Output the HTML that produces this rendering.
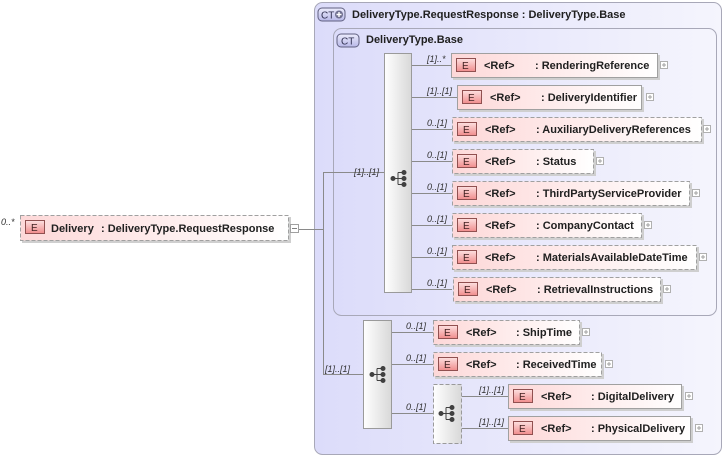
<!DOCTYPE html>
<html><head><meta charset="utf-8"><style>
html,body{margin:0;padding:0;background:#fff;width:728px;height:458px;overflow:hidden}
svg{display:block}
text{font-family:"Liberation Sans",Arial,sans-serif}
.t{font-size:11px;font-weight:bold;fill:#202020}
.c{font-size:9px;font-style:italic;fill:#303030}
.ln{stroke:#8a8a8a;stroke-width:1;fill:none}
</style></head><body>
<svg width="728" height="458" xmlns="http://www.w3.org/2000/svg">
<defs>
<linearGradient id="ct" x1="0" y1="0" x2="1" y2="0"><stop offset="0" stop-color="#dcdcfa"/><stop offset="1" stop-color="#f5f5fd"/></linearGradient>
<linearGradient id="el" x1="0" y1="0" x2="1" y2="0"><stop offset="0" stop-color="#fdd8d8"/><stop offset="1" stop-color="#ffffff"/></linearGradient>
<linearGradient id="eb" x1="0" y1="0" x2="0" y2="1"><stop offset="0" stop-color="#fde0e0"/><stop offset="1" stop-color="#f08c8c"/></linearGradient>
<linearGradient id="sq" x1="0" y1="0" x2="1" y2="0"><stop offset="0" stop-color="#ffffff"/><stop offset="1" stop-color="#d8d8d8"/></linearGradient>
<linearGradient id="ctb" x1="0" y1="0" x2="0" y2="1"><stop offset="0" stop-color="#ececfc"/><stop offset="1" stop-color="#b8b8e8"/></linearGradient>
</defs>

<rect x="314.5" y="2.5" width="407" height="452" rx="8" fill="url(#ct)" stroke="#a8a8b8"/>
<rect x="318" y="8" width="27" height="13" rx="4" fill="url(#ctb)" stroke="#606080"/>
<text x="321" y="18.5" style="font-size:10px;fill:#303050">CT</text>
<circle cx="339" cy="14.5" r="4" fill="#707090"/><path d="M336.5 14.5h5M339 12v5" stroke="#fff" stroke-width="1.4"/>
<text x="352" y="18" class="t">DeliveryType.RequestResponse : DeliveryType.Base</text>

<rect x="333.5" y="28.5" width="383" height="287" rx="8" fill="url(#ct)" stroke="#a8a8b8"/>
<rect x="337" y="34" width="22" height="13" rx="4" fill="url(#ctb)" stroke="#606080"/>
<text x="341" y="44.5" style="font-size:10px;fill:#303050">CT</text>
<text x="366" y="43" class="t">DeliveryType.Base</text>

<path class="ln" d="M296 229.5H323.5V172.5H384M323.5 229.5V374.5H363"/>
<text x="354" y="175" class="c">[1]..[1]</text>
<text x="325" y="372" class="c">[1]..[1]</text>

<path class="ln" d="M412 65.5H451M412 97.5H457M412 129.5H452M412 161.5H452M412 193.5H452M412 225.5H452M412 257.5H452M412 289.5H452"/>
<rect x="384.5" y="53.5" width="27" height="239" fill="url(#sq)" stroke="#9a9a9a"/>
<g fill="#404040" stroke="#404040">
<circle cx="393" cy="178.5" r="2"/><path d="M393 178.5h5M398 172.5v12M398 172.5h6M398 178.5h6M398 184.5h6" fill="none"/>
<circle cx="404" cy="172.5" r="2"/><circle cx="404" cy="178.5" r="2"/><circle cx="404" cy="184.5" r="2"/>
</g>
<text x="427" y="62" class="c">[1]..*</text>
<text x="427" y="94" class="c">[1]..[1]</text>
<text x="427" y="126" class="c">0..[1]</text>
<text x="427" y="158" class="c">0..[1]</text>
<text x="427" y="190" class="c">0..[1]</text>
<text x="427" y="222" class="c">0..[1]</text>
<text x="427" y="254" class="c">0..[1]</text>
<text x="427" y="286" class="c">0..[1]</text>

<path class="ln" d="M392 332.5H433M392 364.5H433M392 413.5H433M462 396.5H508M462 428.5H508"/>
<rect x="363.5" y="320.5" width="28" height="108" fill="url(#sq)" stroke="#9a9a9a"/>
<g fill="#404040" stroke="#404040">
<circle cx="372" cy="374.5" r="2"/><path d="M372 374.5h5M377 368.5v12M377 368.5h6M377 374.5h6M377 380.5h6" fill="none"/>
<circle cx="383" cy="368.5" r="2"/><circle cx="383" cy="374.5" r="2"/><circle cx="383" cy="380.5" r="2"/>
</g>
<text x="406" y="329" class="c">0..[1]</text>
<text x="406" y="361" class="c">0..[1]</text>
<text x="406" y="410" class="c">0..[1]</text>
<rect x="433.5" y="384.5" width="28" height="59" fill="url(#sq)" stroke="#9a9a9a" stroke-dasharray="4,2"/>
<g fill="#404040" stroke="#404040">
<circle cx="441" cy="413.5" r="2"/><path d="M441 413.5h5M446 407.5v12M446 407.5h6M446 413.5h6M446 419.5h6" fill="none"/>
<circle cx="452" cy="407.5" r="2"/><circle cx="452" cy="413.5" r="2"/><circle cx="452" cy="419.5" r="2"/>
</g>
<text x="479" y="393" class="c">[1]..[1]</text>
<text x="479" y="425" class="c">[1]..[1]</text>

<text x="1" y="225" class="c">0..*</text>
<rect x="22" y="217" width="269" height="26" fill="#cfcfcf"/>
<rect x="20.5" y="215.5" width="268" height="25" fill="url(#el)" stroke="#a0a0a0" stroke-dasharray="4,2"/>
<rect x="25.5" y="220.5" width="19" height="13" fill="url(#eb)" stroke="#905050"/>
<text x="31" y="231" style="font-size:10px;fill:#402020">E</text>
<text x="51" y="232" class="t">Delivery</text>
<text x="101" y="232" class="t">: DeliveryType.RequestResponse</text>
<rect x="290.5" y="224.5" width="8" height="8" fill="#fff" stroke="#a0a0a0"/><path d="M292 228.5h5" stroke="#808080"/>

<g>
<rect x="453" y="55" width="207" height="25" fill="#cfcfcf"/><rect x="451.5" y="53.5" width="206" height="24" fill="url(#el)" stroke="#a0a0a0"/>
<rect x="456.5" y="58.5" width="19" height="13" fill="url(#eb)" stroke="#905050"/><text x="462" y="69" style="font-size:10px;fill:#402020">E</text>
<text x="484" y="69" class="t">&lt;Ref&gt;</text><text x="535" y="69" class="t">: RenderingReference</text>
<rect x="660.5" y="61.5" width="7" height="7" fill="#fff" stroke="#b0b0b0"/><path d="M662 65h4M664 63v4" stroke="#a0a0a0"/>

<rect x="459" y="87" width="185" height="25" fill="#cfcfcf"/><rect x="457.5" y="85.5" width="184" height="24" fill="url(#el)" stroke="#a0a0a0"/>
<rect x="462.5" y="90.5" width="19" height="13" fill="url(#eb)" stroke="#905050"/><text x="468" y="101" style="font-size:10px;fill:#402020">E</text>
<text x="490" y="101" class="t">&lt;Ref&gt;</text><text x="541" y="101" class="t">: DeliveryIdentifier</text>
<rect x="646.5" y="93.5" width="7" height="7" fill="#fff" stroke="#b0b0b0"/><path d="M648 97h4M650 95v4" stroke="#a0a0a0"/>

<rect x="454" y="119" width="250" height="25" fill="#cfcfcf"/><rect x="452.5" y="117.5" width="249" height="24" fill="url(#el)" stroke="#a0a0a0" stroke-dasharray="4,2"/>
<rect x="457.5" y="122.5" width="19" height="13" fill="url(#eb)" stroke="#905050"/><text x="463" y="133" style="font-size:10px;fill:#402020">E</text>
<text x="485" y="133" class="t">&lt;Ref&gt;</text><text x="536" y="133" class="t">: AuxiliaryDeliveryReferences</text>
<rect x="703.5" y="125.5" width="7" height="7" fill="#fff" stroke="#b0b0b0"/><path d="M705 129h4M707 127v4" stroke="#a0a0a0"/>

<rect x="454" y="151" width="142" height="25" fill="#cfcfcf"/><rect x="452.5" y="149.5" width="141" height="24" fill="url(#el)" stroke="#a0a0a0" stroke-dasharray="4,2"/>
<rect x="457.5" y="154.5" width="19" height="13" fill="url(#eb)" stroke="#905050"/><text x="463" y="165" style="font-size:10px;fill:#402020">E</text>
<text x="485" y="165" class="t">&lt;Ref&gt;</text><text x="536" y="165" class="t">: Status</text>
<rect x="596.5" y="157.5" width="7" height="7" fill="#fff" stroke="#b0b0b0"/><path d="M598 161h4M600 159v4" stroke="#a0a0a0"/>

<rect x="454" y="183" width="238" height="25" fill="#cfcfcf"/><rect x="452.5" y="181.5" width="237" height="24" fill="url(#el)" stroke="#a0a0a0" stroke-dasharray="4,2"/>
<rect x="457.5" y="186.5" width="19" height="13" fill="url(#eb)" stroke="#905050"/><text x="463" y="197" style="font-size:10px;fill:#402020">E</text>
<text x="485" y="197" class="t">&lt;Ref&gt;</text><text x="536" y="197" class="t">: ThirdPartyServiceProvider</text>
<rect x="692.5" y="189.5" width="7" height="7" fill="#fff" stroke="#b0b0b0"/><path d="M694 193h4M696 191v4" stroke="#a0a0a0"/>

<rect x="454" y="215" width="190" height="25" fill="#cfcfcf"/><rect x="452.5" y="213.5" width="189" height="24" fill="url(#el)" stroke="#a0a0a0" stroke-dasharray="4,2"/>
<rect x="457.5" y="218.5" width="19" height="13" fill="url(#eb)" stroke="#905050"/><text x="463" y="229" style="font-size:10px;fill:#402020">E</text>
<text x="485" y="229" class="t">&lt;Ref&gt;</text><text x="536" y="229" class="t">: CompanyContact</text>
<rect x="644.5" y="221.5" width="7" height="7" fill="#fff" stroke="#b0b0b0"/><path d="M646 225h4M648 223v4" stroke="#a0a0a0"/>

<rect x="454" y="247" width="245" height="25" fill="#cfcfcf"/><rect x="452.5" y="245.5" width="244" height="24" fill="url(#el)" stroke="#a0a0a0" stroke-dasharray="4,2"/>
<rect x="457.5" y="250.5" width="19" height="13" fill="url(#eb)" stroke="#905050"/><text x="463" y="261" style="font-size:10px;fill:#402020">E</text>
<text x="485" y="261" class="t">&lt;Ref&gt;</text><text x="536" y="261" class="t">: MaterialsAvailableDateTime</text>
<rect x="699.5" y="253.5" width="7" height="7" fill="#fff" stroke="#b0b0b0"/><path d="M701 257h4M703 255v4" stroke="#a0a0a0"/>

<rect x="455" y="279" width="208" height="25" fill="#cfcfcf"/><rect x="453.5" y="277.5" width="207" height="24" fill="url(#el)" stroke="#a0a0a0" stroke-dasharray="4,2"/>
<rect x="458.5" y="282.5" width="19" height="13" fill="url(#eb)" stroke="#905050"/><text x="464" y="293" style="font-size:10px;fill:#402020">E</text>
<text x="486" y="293" class="t">&lt;Ref&gt;</text><text x="537" y="293" class="t">: RetrievalInstructions</text>
<rect x="663.5" y="285.5" width="7" height="7" fill="#fff" stroke="#b0b0b0"/><path d="M665 289h4M667 287v4" stroke="#a0a0a0"/>

<rect x="435" y="322" width="147" height="25" fill="#cfcfcf"/><rect x="433.5" y="320.5" width="146" height="24" fill="url(#el)" stroke="#a0a0a0" stroke-dasharray="4,2"/>
<rect x="438.5" y="325.5" width="19" height="13" fill="url(#eb)" stroke="#905050"/><text x="444" y="336" style="font-size:10px;fill:#402020">E</text>
<text x="466" y="336" class="t">&lt;Ref&gt;</text><text x="516" y="336" class="t">: ShipTime</text>
<rect x="582.5" y="328.5" width="7" height="7" fill="#fff" stroke="#b0b0b0"/><path d="M584 332h4M586 330v4" stroke="#a0a0a0"/>

<rect x="435" y="354" width="169" height="25" fill="#cfcfcf"/><rect x="433.5" y="352.5" width="168" height="24" fill="url(#el)" stroke="#a0a0a0" stroke-dasharray="4,2"/>
<rect x="438.5" y="357.5" width="19" height="13" fill="url(#eb)" stroke="#905050"/><text x="444" y="368" style="font-size:10px;fill:#402020">E</text>
<text x="466" y="368" class="t">&lt;Ref&gt;</text><text x="516" y="368" class="t">: ReceivedTime</text>
<rect x="605.5" y="360.5" width="7" height="7" fill="#fff" stroke="#b0b0b0"/><path d="M607 364h4M609 362v4" stroke="#a0a0a0"/>

<rect x="510" y="386" width="174" height="25" fill="#cfcfcf"/><rect x="508.5" y="384.5" width="173" height="24" fill="url(#el)" stroke="#a0a0a0"/>
<rect x="513.5" y="389.5" width="19" height="13" fill="url(#eb)" stroke="#905050"/><text x="519" y="400" style="font-size:10px;fill:#402020">E</text>
<text x="541" y="400" class="t">&lt;Ref&gt;</text><text x="591" y="400" class="t">: DigitalDelivery</text>
<rect x="685.5" y="392.5" width="7" height="7" fill="#fff" stroke="#b0b0b0"/><path d="M687 396h4M689 394v4" stroke="#a0a0a0"/>

<rect x="510" y="418" width="183" height="25" fill="#cfcfcf"/><rect x="508.5" y="416.5" width="182" height="24" fill="url(#el)" stroke="#a0a0a0"/>
<rect x="513.5" y="421.5" width="19" height="13" fill="url(#eb)" stroke="#905050"/><text x="519" y="432" style="font-size:10px;fill:#402020">E</text>
<text x="541" y="432" class="t">&lt;Ref&gt;</text><text x="591" y="432" class="t">: PhysicalDelivery</text>
<rect x="695.5" y="424.5" width="7" height="7" fill="#fff" stroke="#b0b0b0"/><path d="M697 428h4M699 426v4" stroke="#a0a0a0"/>
</g>
</svg>
</body></html>
